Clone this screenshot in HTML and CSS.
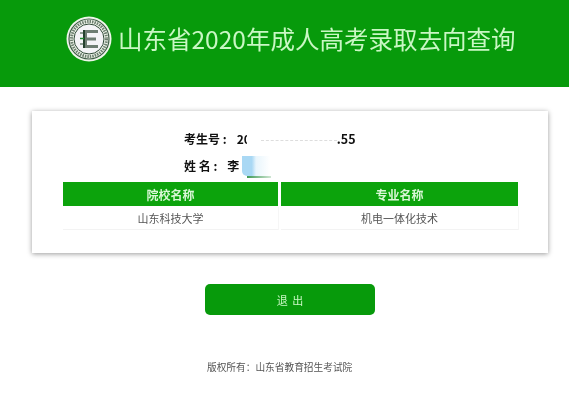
FILE: index.html
```html
<!DOCTYPE html>
<html lang="zh">
  <head>
    <meta charset="utf-8" />
    <title>山东省2020年成人高考录取去向查询</title>
    <link rel="stylesheet" href="styles.css" />
  </head>
  <body>
    <!-- Green banner -->
    <div class="header">
      <svg class="logo" width="46" height="46" viewBox="0 0 46 46">
        <circle cx="23" cy="23" r="22.500" fill="#eef5ea" />
        <circle cx="23" cy="23" r="20" fill="none" stroke="#3f5c47" stroke-width="1.200" />
        <circle cx="23" cy="23" r="17.500" fill="none" stroke="#6d7f70" stroke-width="3" stroke-dasharray="1.500 1" />
        <circle cx="23" cy="23" r="15" fill="#f4f4f7" stroke="#2f4a37" stroke-width="1" />
        <path d="M18 14h14v3H21v4.500h9v3h-9V29h11v3H18z" fill="#6d7d72" />
        <path d="M18 14v18" stroke="#24402d" stroke-width="2" />
        <path d="M14 17h4M14 28h4" stroke="#2c4a35" stroke-width="1.200" />
        <path d="M14 22.500h4" stroke="#1d8a2d" stroke-width="1.500" />
      </svg>
      <h1 class="title">山东省2020年成人高考录取去向查询</h1>
    </div>

    <div class="card">
      <div class="info">
        <p class="line"><b>考生号 :</b><span class="value">20</span><span class="mask"><i></i></span><span class="value num">.55</span></p>
        <p class="line"><b>姓 名 :</b><span class="value">李</span></p>
        <!-- redaction smear over the name -->
        <div class="blob"></div>
        <div class="smear"></div>
      </div>

      <div class="table">
        <div class="th">院校名称</div>
        <div class="th">专业名称</div>
        <div class="td">山东科技大学</div>
        <div class="td">机电一体化技术</div>
      </div>
    </div>

    <button class="exit">退 出</button>

    <p class="copyright">版权所有：山东省教育招生考试院</p>
  </body>
</html>
```

FILE: styles.css
```css
html {
  height: 100%;
}
body {
  margin: 0;
  background-color: #ffffff;
  color: #333333;
  font-family: "Noto Sans CJK SC", "Liberation Sans", sans-serif;
  overflow: hidden;
  filter: blur(0.4px);
}
.header {
  display: flex;
  align-items: center;
  height: 87px;
  padding: 0 0 9px 66px;
  box-sizing: border-box;
  background-color: #079a0b;
}
.logo {
  flex: none;
  margin-right: 6px;
}
.title {
  margin: 0;
  font-size: 24.500px;
  font-weight: 400;
  line-height: 30px;
  color: #c9f7c4;
  white-space: nowrap;
}
.card {
  width: 516px;
  height: 142px;
  margin: 24px 0 0 32px;
  padding-top: 14px;
  box-sizing: border-box;
  background-color: #ffffff;
  box-shadow: 0 1px 5px rgba(0, 0, 0, 0.4);
}
.info {
  position: relative;
  height: 57px;
  padding-left: 152px;
}
.line {
  display: flex;
  align-items: center;
  height: 27px;
  margin: 0;
  font-size: 12px;
  color: #111111;
}
.line b {
  font-weight: 700;
  margin-right: 10px;
  white-space: pre;
}
.value {
  font-weight: 700;
}
.num {
  font-size: 12.500px;
}
.mask {
  width: 90px;
  height: 16px;
  margin-left: -4px;
  background-color: #ffffff;
  display: flex;
  align-items: center;
}
.mask i {
  display: block;
  width: 100%;
  margin: 4px 0 0 14px;
  border-top: 1px dashed #dddddd;
}
.blob {
  position: absolute;
  left: 210px;
  top: 31px;
  width: 28px;
  height: 20px;
  background: linear-gradient(to right, #a9d8f4 0, #a9d8f4 35%, #e8f5fc 50%, #ffffff 100%);
  border-radius: 0 0 0 5px;
}
.smear {
  position: absolute;
  left: 215px;
  top: 51px;
  width: 24px;
  height: 2px;
  background: linear-gradient(to right, #3f9a55, #cfe6d3);
}
.table {
  display: grid;
  grid-template-columns: 215px 237px;
  gap: 0 3px;
  width: 455px;
  margin-left: 31px;
}
.th {
  height: 24px;
  margin-bottom: 1px;
  line-height: 25px;
  background-color: #0ca30c;
  color: #d9f7d6;
  font-size: 12px;
  font-weight: 700;
  text-align: center;
}
.td {
  height: 22px;
  line-height: 22px;
  font-size: 11px;
  color: #555555;
  text-align: center;
  border-bottom: 1px solid #f3f3f3;
  box-shadow: 1px 0 0 #f6f6f6;
}
.exit {
  display: block;
  width: 170px;
  height: 31px;
  margin: 31px 0 0 205px;
  padding: 0;
  border: 0;
  border-radius: 5px;
  background-color: #079a0b;
  color: #c9f7c4;
  font-family: inherit;
  font-size: 11px;
  word-spacing: 2px;
}
.copyright {
  margin: 44px 0 0 207px;
  font-size: 9.700px;
  line-height: 16px;
  color: #555555;
}
```
